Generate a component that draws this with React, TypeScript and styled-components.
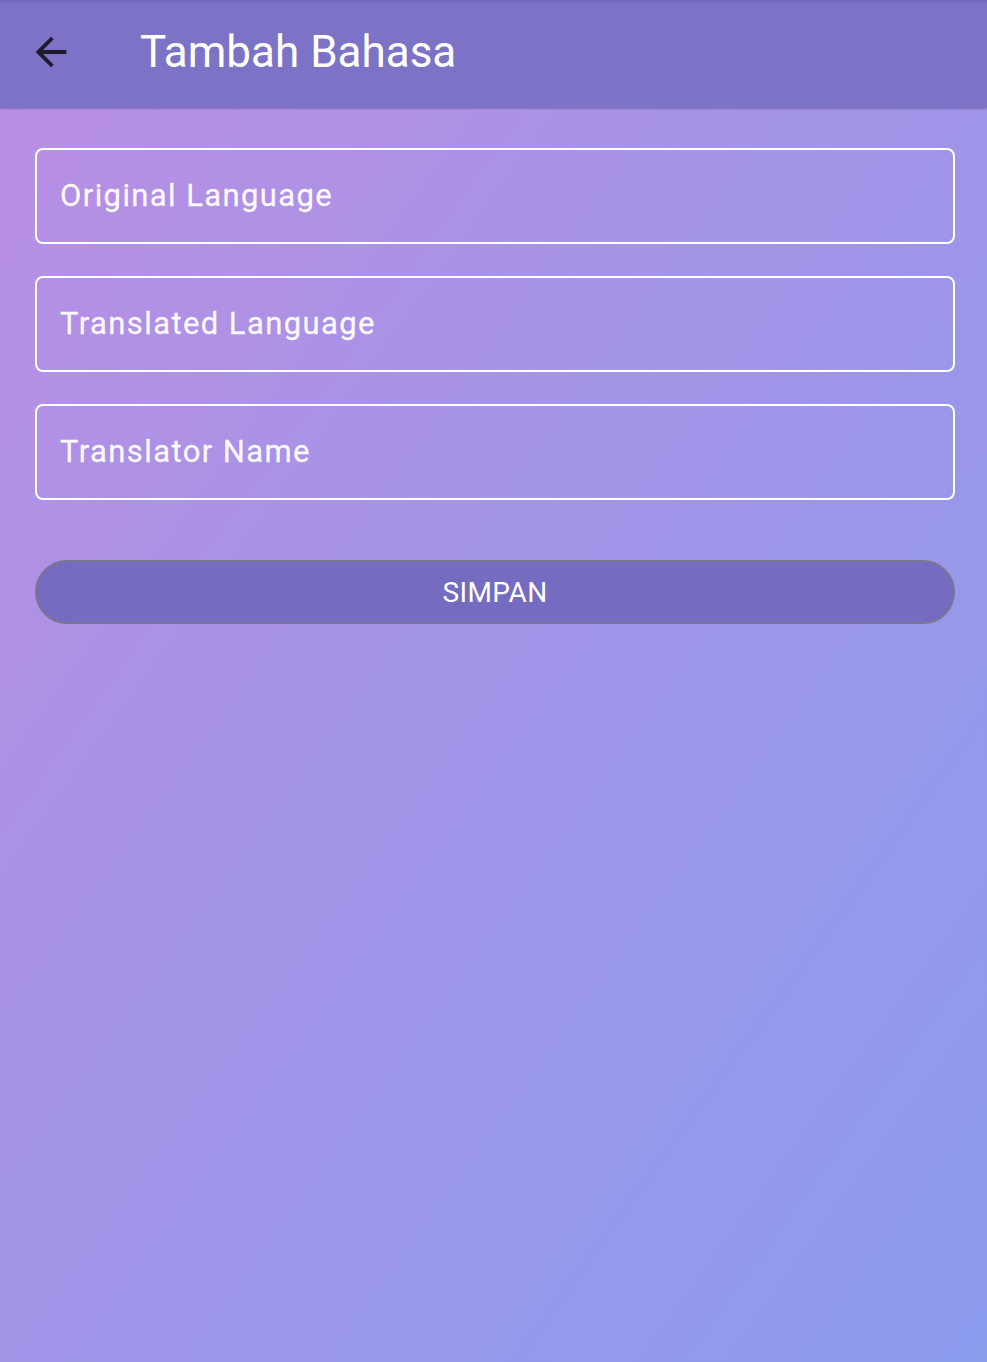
import React from "react";
import styled, { createGlobalStyle } from "styled-components";

const Global = createGlobalStyle`
  html, body { margin: 0; padding: 0; }
  body {
    width: 987px;
    height: 1362px;
    overflow: hidden;
    font-family: Roboto, "Noto Sans", sans-serif;
    background: linear-gradient(to bottom right, #bb8ee3 0%, #a195e8 50%, #8a9bec 100%);
  }
`;

const Screen = styled.div`
  width: 987px;
  height: 1362px;
  display: flex;
  flex-direction: column;
`;

const AppBar = styled.header`
  box-sizing: border-box;
  height: 108px;
  flex: none;
  display: flex;
  align-items: center;
  padding-bottom: 4px;
  background: linear-gradient(to bottom, #7268b8 0px, #7c72c6 4px, #7c72c6 100%);
  box-shadow: 0 1px 2px rgba(60, 40, 110, 0.35);
`;

const BackButton = styled.button`
  width: 46px;
  height: 46px;
  margin-left: 28px;
  margin-right: 66px;
  padding: 0;
  border: none;
  background: transparent;
  display: flex;
  align-items: center;
  justify-content: center;
  color: #1d1a2b;
`;

const Title = styled.h1`
  margin: 0;
  font-family: Roboto, sans-serif;
  font-weight: 400;
  font-size: 44px;
  color: #ffffff;
  letter-spacing: 0px;
`;

const Body = styled.main`
  display: flex;
  flex-direction: column;
  padding: 40px 32px 0 35px;
`;

const Field = styled.div`
  box-sizing: border-box;
  height: 96px;
  border: 2px solid #ffffff;
  border-radius: 8px;
  display: flex;
  align-items: center;
  padding-left: 23px;
  margin-bottom: 32px;
`;

const Label = styled.span`
  font-family: Roboto, sans-serif;
  font-size: 31px;
  font-weight: 400;
  letter-spacing: 1.4px;
  color: rgba(255, 255, 255, 0.95);
  -webkit-text-stroke: 0.3px rgba(255, 255, 255, 0.95);
  margin-top: -2px;
`;

const SaveButton = styled.button`
  box-sizing: border-box;
  margin-top: 28px;
  height: 64px;
  border-radius: 32px;
  border: 2px solid #7a7690;
  background: #756bc0;
  color: #ffffff;
  font-family: Roboto, sans-serif;
  font-size: 28px;
  letter-spacing: 0.4px;
  display: flex;
  align-items: center;
  justify-content: center;
`;

const ArrowBack = () => (
  <svg width="46" height="46" viewBox="0 0 24 24" fill="currentColor">
    <path d="M20 11H7.83l5.59-5.59L12 4l-8 8 8 8 1.41-1.41L7.83 13H20v-2z" />
  </svg>
);

const fields = ["Original Language", "Translated Language", "Translator Name"];

export default function App() {
  return (
    <>
      <Global />
      <Screen>
        <AppBar>
          <BackButton aria-label="Back">
            <ArrowBack />
          </BackButton>
          <Title>Tambah Bahasa</Title>
        </AppBar>
        <Body>
          {fields.map((f) => (
            <Field key={f}>
              <Label>{f}</Label>
            </Field>
          ))}
          <SaveButton>SIMPAN</SaveButton>
        </Body>
      </Screen>
    </>
  );
}
